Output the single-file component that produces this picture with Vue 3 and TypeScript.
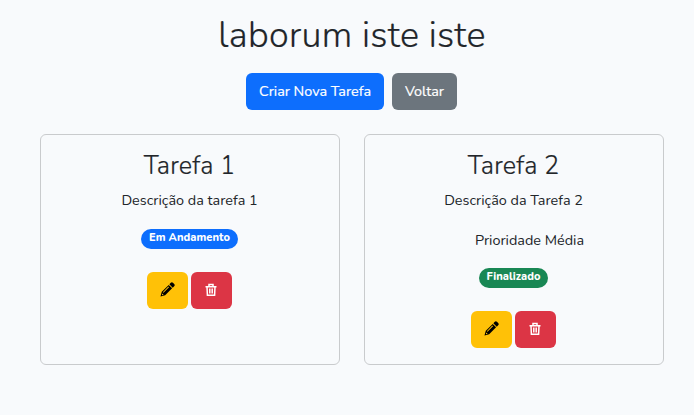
<script setup lang="ts">
interface Task {
  id: number
  title: string
  description: string
  priority?: string
  status: string
  tone: 'primary' | 'success'
}

const tasks: Task[] = [
  { id: 1, title: 'Tarefa 1', description: 'Descrição da tarefa 1', status: 'Em Andamento', tone: 'primary' },
  { id: 2, title: 'Tarefa 2', description: 'Descrição da Tarefa 2', priority: 'Prioridade Média', status: 'Finalizado', tone: 'success' },
]
</script>

<template>
  <main class="page">
    <h1 class="heading">laborum iste iste</h1>
    <div class="toolbar">
      <button class="btn create">Criar Nova Tarefa</button>
      <button class="btn back">Voltar</button>
    </div>
    <section class="cards">
      <article v-for="task in tasks" :key="task.id" class="card">
        <h2 class="title">{{ task.title }}</h2>
        <p class="description">{{ task.description }}</p>
        <p v-if="task.priority" class="priority">{{ task.priority }}</p>
        <span class="badge" :class="task.tone">{{ task.status }}</span>
        <div class="actions">
          <button class="action edit" aria-label="Editar">
            <svg width="15" height="15" viewBox="0 0 16 16" fill="currentColor">
              <path fill-rule="evenodd" d="M13.8.9a1.6 1.6 0 0 0-2.3 0L10 2.4 13.6 6l1.5-1.5a1.6 1.6 0 0 0 0-2.3zM9.3 3.1 1.9 10.5.5 15.5l5-1.4 7.4-7.4zM8.9 4.9l.7.7-5.9 5.9-.7-.7zM2.5 12.2l1.3 1.3-1.4.5-.4-.4z" />
            </svg>
          </button>
          <button class="action remove" aria-label="Excluir">
            <svg width="12" height="14" viewBox="0 0 12 14" fill="none" stroke="currentColor" stroke-width="1.5">
              <path d="M.5 3.7h11M4 3.5V1.6h4v1.9M2 3.7l.4 8.6h7.2l.4-8.6M4.8 5.5v5M7.2 5.5v5" />
            </svg>
          </button>
        </div>
      </article>
    </section>
  </main>
</template>

<style>
body { background: #f8fafc; }
</style>

<style scoped>
.page {
  box-sizing: border-box;
  min-height: 415px;
  padding: 14px 30px 0 40px;
  background: #f8fafc;
  color: #212529;
  font: 14.4px/22px Nunito, "Open Sans", sans-serif;
}
h1, h2, p { margin: 0; text-align: center; }
h1, h2 { font-weight: 300; -webkit-text-stroke: 0.2px currentColor; }
button { border: 0; padding: 0; color: #fff; font: inherit; border-radius: 6px; }
.heading { width: 624px; height: 44px; font-size: 36px; line-height: 44px; letter-spacing: 0.33px; }
.toolbar { display: flex; justify-content: center; gap: 8px; width: 623px; margin-top: 15px; }
.btn { height: 37px; padding-bottom: 1px; white-space: nowrap; -webkit-text-stroke: 0.2px currentColor; }
.create { width: 138px; background: #0d6efd; }
.back { width: 65px; background: #6c757d; }
.cards { display: grid; grid-template-columns: 300px 300px; gap: 24px; margin-top: 24px; }
.card {
  box-sizing: border-box;
  display: flex;
  flex-direction: column;
  align-items: center;
  height: 231px;
  padding: 15px 1px 0 0;
  border: 1px solid #c9cbcd;
  border-radius: 6px;
}
.title { height: 32px; font-size: 25.2px; line-height: 32px; letter-spacing: 0.15px; }
.description { margin-top: 7px; }
.priority { margin: 18px 0 -1px; padding-left: 32px; }
.badge {
  box-sizing: border-box;
  height: 20px;
  margin-top: 18px;
  border-radius: 10px;
  color: #fff;
  font-size: 11px;
  line-height: 18px;
  font-weight: 800;
  letter-spacing: 0.06px;
  text-align: center;
}
.primary { width: 97px; background: #0d6efd; }
.success { width: 69px; background: #198754; }
.actions { display: flex; gap: 3px; margin-top: 23px; }
.action { display: grid; place-items: center; width: 41px; height: 37px; padding: 0 1px 2px 0; }
.edit { background: #ffc107; color: #000; }
.remove { background: #dc3545; }
</style>
